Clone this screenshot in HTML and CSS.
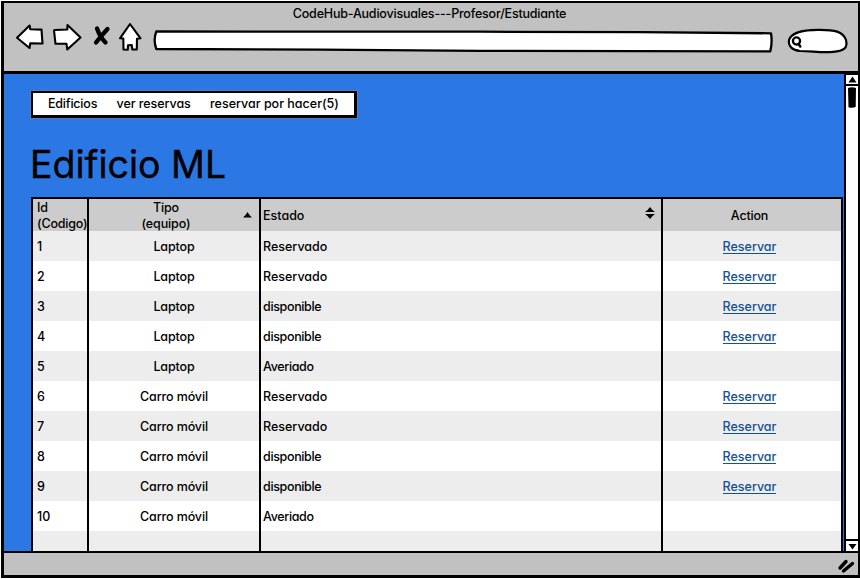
FILE: index.html
```
<!DOCTYPE html>
<html lang="es">
<head>
<meta charset="utf-8">
<title>CodeHub-Audiovisuales</title>
<link rel="stylesheet" href="styles.css">
</head>
<body>
<div class="window">
  <header class="chrome">
    <div class="title">CodeHub-Audiovisuales---Profesor/Estudiante</div>
    <div class="toolbar">
      <svg class="nav-icons" width="130" height="32" viewBox="14 22 130 32">
        <g fill="#fff" stroke="#000" stroke-width="2.100" stroke-linejoin="round">
          <path d="M17 37.800L29.600 25.500L30.300 29.300L41.500 29.600L42.500 43.500L30.300 43.300L29.500 48Z"/>
          <path d="M54 30.500L55 30L67.300 29.500L67.500 25L80.500 37.500L67.300 49.500L66.500 43.800L55.500 43.800Z"/>
          <path d="M130 24L120 38.300L123.300 38.500L123.500 49.500L127.800 49.700L128 45.200L131.800 45L132.300 49.500L136.800 49.400L137 38.700L140.500 38.300Z"/>
        </g>
        <path fill="none" stroke="#000" stroke-linecap="round" stroke-width="4.300" d="M97 28.500Q100 37 105.500 42.500M107.500 29Q101 36 96 42.500"/>
      </svg>
      <svg class="address" width="624" height="28" viewBox="152 27 624 28">
        <path fill="#fff" stroke="#000" stroke-width="2.300" stroke-linejoin="round" d="M156.300 31.500L480 31.700L640 32.200L771 33.300Q772.500 42 770.300 51.300L480 50.800L320 49.700L156.300 49Q153 40 156.300 31.500Z"/>
      </svg>
      <svg class="search" width="64" height="28" viewBox="785 27 64 28">
        <path fill="#fff" stroke="#000" stroke-width="2.200" d="M800 51C792 50 788 46 789 40C791 33 803 29.500 820 29.800C834 30 843 31 846 40C848 48 844 51 833 51.800C822 53 812 51 800 51Z"/>
        <circle cx="796.500" cy="41" r="3.600" fill="#fff" stroke="#000" stroke-width="2.300"/>
        <path d="M798.500 44L800.300 46.500" stroke="#000" stroke-width="2.500" stroke-linecap="round"/>
      </svg>
    </div>
  </header>
  <div class="viewport">
    <main class="page">
      <nav class="menu"><a class="m1">Edificios</a><a class="m2">ver reservas</a><a class="m3">reservar por hacer(5)</a></nav>
      <h1>Edificio ML</h1>
      <div class="grid">
        <div class="row head">
          <div class="id">Id<br>(Codigo)</div>
          <div class="type"><span>Tipo<br>(equipo)</span><svg class="up" width="9" height="6"><path d="M0 5.500Q3 3 4.500 0Q6 3 9 5.500Z"/></svg></div>
          <div class="state">Estado<svg class="both" width="10" height="12"><path d="M0 5Q3 3 5 0Q7 3 10 5ZM0 7Q3 9 5 12Q7 9 10 7Z"/></svg></div>
          <div class="action">Action</div>
        </div>
        <div class="row"><div class="id">1</div><div class="type">Laptop</div><div class="state">Reservado</div><div class="action"><a>Reservar</a></div></div>
        <div class="row"><div class="id">2</div><div class="type">Laptop</div><div class="state">Reservado</div><div class="action"><a>Reservar</a></div></div>
        <div class="row"><div class="id">3</div><div class="type">Laptop</div><div class="state narrow">disponible</div><div class="action"><a>Reservar</a></div></div>
        <div class="row"><div class="id">4</div><div class="type">Laptop</div><div class="state narrow">disponible</div><div class="action"><a>Reservar</a></div></div>
        <div class="row"><div class="id">5</div><div class="type">Laptop</div><div class="state narrow">Averiado</div><div class="action"></div></div>
        <div class="row"><div class="id">6</div><div class="type">Carro móvil</div><div class="state">Reservado</div><div class="action"><a>Reservar</a></div></div>
        <div class="row"><div class="id">7</div><div class="type">Carro móvil</div><div class="state">Reservado</div><div class="action"><a>Reservar</a></div></div>
        <div class="row"><div class="id">8</div><div class="type">Carro móvil</div><div class="state narrow">disponible</div><div class="action"><a>Reservar</a></div></div>
        <div class="row"><div class="id">9</div><div class="type">Carro móvil</div><div class="state narrow">disponible</div><div class="action"><a>Reservar</a></div></div>
        <div class="row"><div class="id">10</div><div class="type">Carro móvil</div><div class="state narrow">Averiado</div><div class="action"></div></div>
        <div class="row"><div class="id"></div><div class="type"></div><div class="state"></div><div class="action"></div></div>
      </div>
    </main>
    <div class="scrollbar">
      <div class="arrow top"><svg width="9" height="7"><path d="M.5 6.500L4.500 .5L8.500 6.500Z"/></svg></div>
      <div class="track"><svg width="10" height="23"><path d="M1 2Q5 .5 9 2L8.700 21Q5 22.500 1.500 21.300Z"/></svg></div>
      <div class="arrow bottom"><svg width="9" height="7"><path d="M.5 1L8.500 1L4.500 6.500Z"/></svg></div>
    </div>
  </div>
  <footer class="status">
    <svg width="18" height="15" viewBox="837 559 18 15"><path d="M840 568L846 561.500M843.500 571L852.500 563.500" fill="none" stroke="#000" stroke-width="3.400" stroke-linecap="round"/></svg>
  </footer>
</div>
</body>
</html>
```

FILE: styles.css
```
* { box-sizing: border-box; }

body {
  margin: 0;
  height: 579px;
  overflow: hidden;
  background: #fff;
  color: #000;
  font: 500 12.5px/16px Inter, "Liberation Sans", sans-serif;
  font-feature-settings: "cv11";
  letter-spacing: 0;
}

svg { display: block; flex: none; }

.window {
  display: flex;
  flex-direction: column;
  height: 577px;
  margin: 1px 0 0 1px;
  border: solid #000;
  border-width: 2px 2px 3px 3px;
}

.chrome {
  height: 71px;
  background: #c1c1c1;
  border-bottom: 3px solid #000;
}

.title {
  height: 19px;
  padding-top: 3px;
  padding-right: 3px;
  text-align: center;
  letter-spacing: -0.2px;
}

.toolbar { display: flex; padding-left: 10px; }
.address { margin: 5px 0 0 8px; }
.search { margin: 5px 0 0 9px; }

.viewport { display: flex; height: 477px; }

.page {
  width: 840px;
  padding: 17px 0 0 27px;
  background: #2b78e4;
}

.menu {
  display: flex;
  width: 326px;
  height: 27px;
  padding: 3px 0 0 15px;
  background: #fff;
  border: solid #000;
  border-width: 2px 3px 3px 2px;
  outline: 1px solid rgba(120, 130, 145, .5);
  letter-spacing: -0.2px;
}

.m1 { width: 68.500px; }
.m2 { width: 93.500px; letter-spacing: -0.05px; }
.m3 { letter-spacing: 0; }

h1 {
  height: 79px;
  margin: 0 0 0 -1px;
  padding-top: 24px;
  font-size: 37.5px;
  font-weight: 400;
  line-height: 46px;
  letter-spacing: 0;
  -webkit-text-stroke: 0.4px #000;
}

.grid {
  width: 812px;
  height: 354px;
  overflow: hidden;
  border: solid #000;
  border-width: 2px 2px 0;
}

.row {
  display: grid;
  grid-template-columns: 56px 172px 402px 1fr;
  height: 30px;
  background: #fff;
}

.row:nth-child(even) { background: #ededed; }
.row.head { height: 32px; grid-template-rows: 32px; background: #ccc; }
.row > div { display: flex; align-items: center; padding-top: 2px; border-right: 2px solid #000; white-space: nowrap; }
.row > div:last-child { border-right: 0; }
.row .id { padding-left: 4px; }
.row .type { justify-content: center; letter-spacing: -0.12px; }
.row .state { padding-left: 2px; }
.row .narrow { letter-spacing: -0.35px; }
.row .action { justify-content: center; padding-right: 5px; letter-spacing: 0; }

.row.head > div { padding-top: 1px; }
.row.head > .id { display: block; }
.head .id, .head .action { letter-spacing: -0.2px; }
.row.head > .type { justify-content: flex-start; align-items: flex-start; }
.head .type span { width: 50px; margin-left: 52px; text-align: center; }
.up { margin: 12px 0 0 52px; }
.both { margin: -5px 6px 0 auto; }

.action a { height: 15px; margin-top: -1px; line-height: 15px; color: #135193; border-bottom: 1px solid #135193; }

.scrollbar {
  display: flex;
  flex-direction: column;
  width: 14px;
  background: #fff;
  border-left: 2px solid #000;
}

.arrow { display: flex; justify-content: center; align-items: center; height: 12px; }
.top { border: solid #000; border-width: 1px 0 2px; }
.bottom { border-top: 2px solid #000; }
.track { flex: 1; padding-left: 1px; }

.status {
  height: 24px;
  flex: 1;
  background: #c1c1c1;
  border-top: 2px solid #000;
  padding: 6px 0 0 833px;
}
```
